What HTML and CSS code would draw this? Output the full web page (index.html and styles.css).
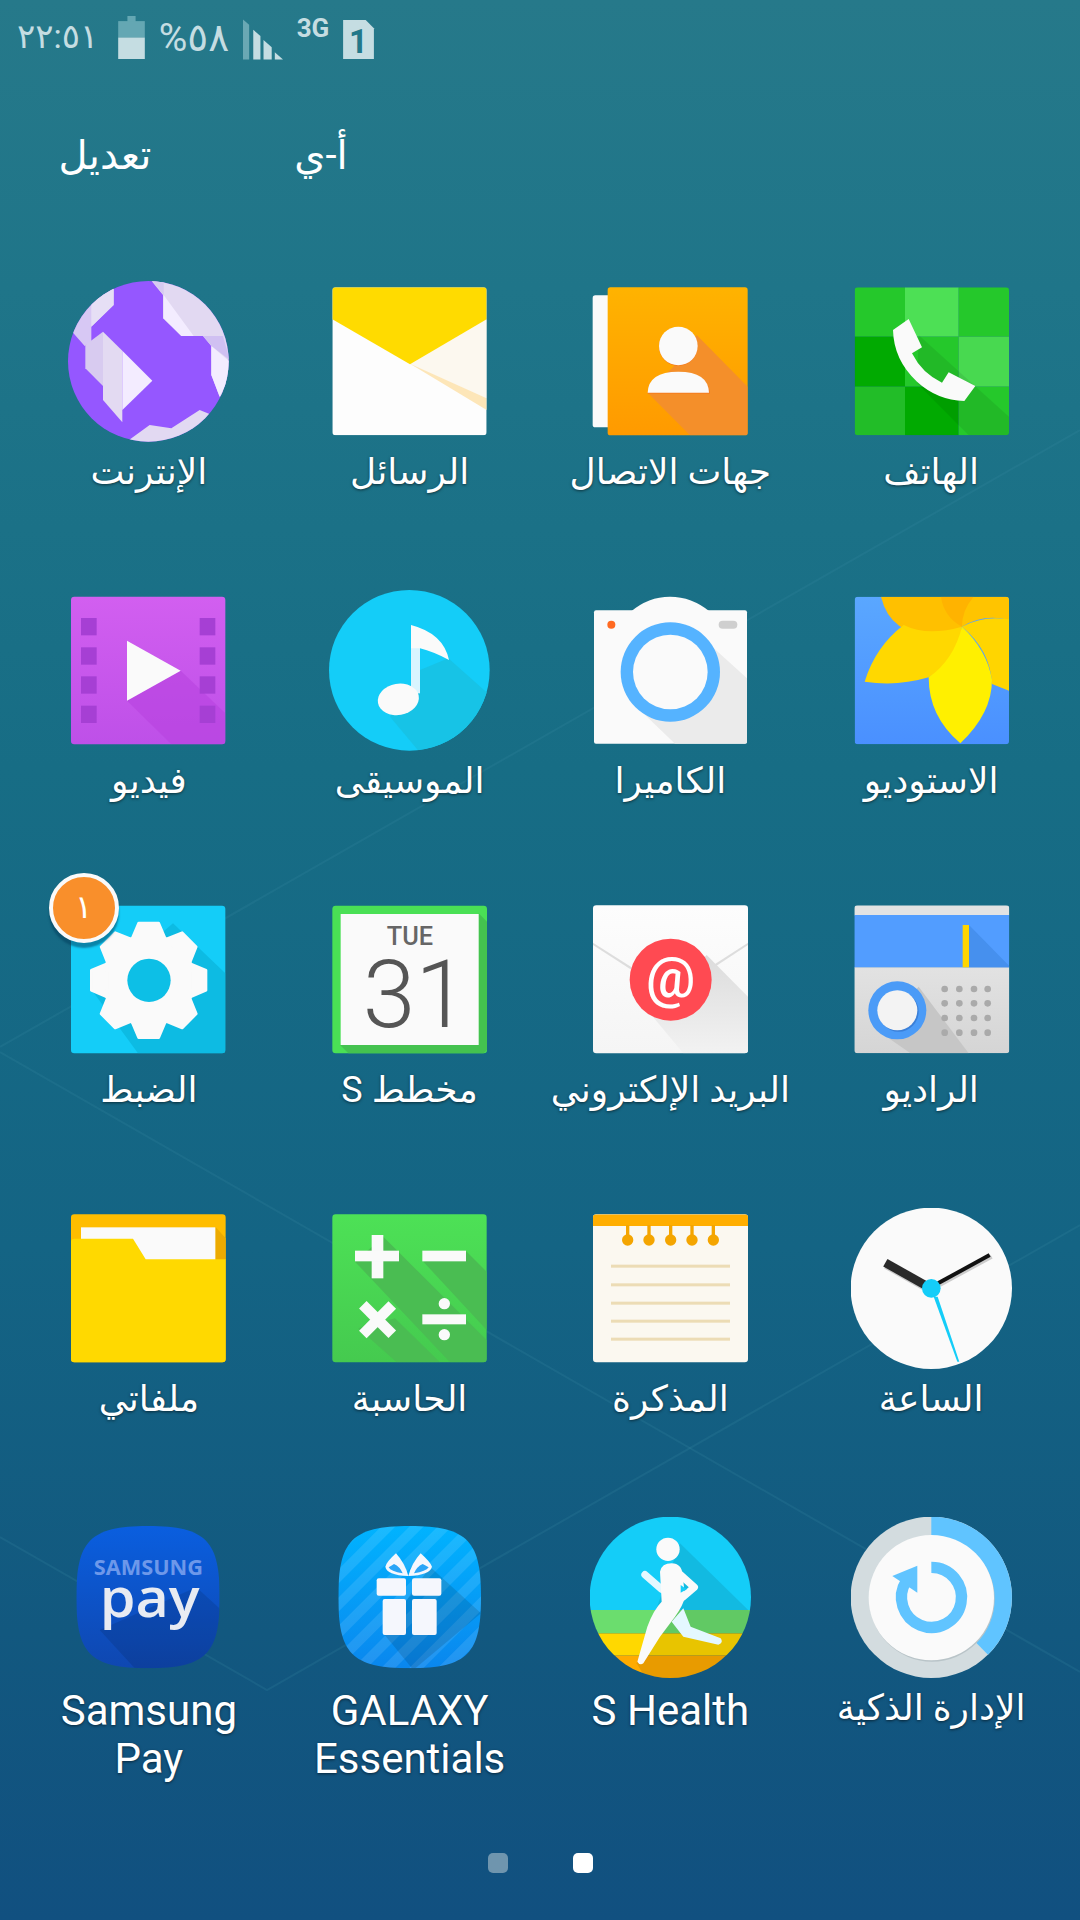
FILE: index.html
```html
<!DOCTYPE html>
<html lang="ar" dir="rtl">
<head>
    <meta charset="UTF-8">
    <title>التطبيقات</title>
    <link rel="stylesheet" href="styles.css">
</head>
<body>
<div class="screen">
    <svg class="wallpaper-lines" viewBox="0 0 1080 1920" aria-hidden="true">
        <polyline points="0,1047 1080,430"/>
        <polyline points="0,1052 1080,1672"/>
        <polyline points="0,1537 267,1690 1080,1225"/>
    </svg>

    <div class="status-bar" dir="ltr">
        <span class="status-time">٢٢:٥١</span>
        <svg class="st-battery" width="27" height="43" viewBox="0 0 26 42">
            <rect x="9" y="0" width="8" height="6" fill="#64a7b3"/>
            <rect x="0" y="5" width="26" height="16" fill="#64a7b3"/>
            <rect x="0" y="21" width="26" height="21" fill="#c5dde2"/>
        </svg>
        <span class="status-percent" dir="rtl">٥٨%</span>
        <svg class="st-signal" width="40" height="41" viewBox="0 0 39 39">
            <polygon points="0,0 6,5 6,39 0,39" fill="#6aa8b4"/>
            <polygon points="10,10 17,16 17,39 10,39" fill="#c5dde2"/>
            <polygon points="20,20 28,27 28,39 20,39" fill="#c5dde2"/>
            <polygon points="31,32 39,39 31,39" fill="#c5dde2"/>
        </svg>
        <span class="status-net">3G</span>
        <svg class="st-sim" width="31" height="39" viewBox="0 0 30 38">
            <polygon points="0,0 22,0 30,8 30,38 0,38" fill="#c5dde2"/>
            <text x="15" y="32" text-anchor="middle" class="sim-num">1</text>
        </svg>
    </div>

    <div class="top-nav" dir="ltr">
        <span class="top-link link-edit">تعديل</span>
        <span class="top-link link-az">أ-ي</span>
    </div>

    <div class="app-grid">

        <div class="app">
            <svg class="app-icon" viewBox="872 63 483 483">
                <defs><clipPath id="phoneClip"><rect x="883" y="82" width="463" height="444" rx="10"/></clipPath></defs>
                <g clip-path="url(#phoneClip)">
                    <rect x="883" y="82" width="151" height="148" fill="#25c82b"/>
                    <rect x="1034" y="82" width="161" height="148" fill="#4de055"/>
                    <rect x="1195" y="82" width="151" height="148" fill="#25c82b"/>
                    <rect x="883" y="230" width="151" height="150" fill="#01aa01"/>
                    <rect x="1034" y="230" width="161" height="150" fill="#25c82b"/>
                    <rect x="1195" y="230" width="151" height="150" fill="#48d950"/>
                    <rect x="883" y="380" width="151" height="146" fill="#22bd28"/>
                    <rect x="1034" y="380" width="161" height="146" fill="#01aa01"/>
                    <rect x="1195" y="380" width="151" height="146" fill="#25c82b"/>
                    <polygon points="1075,225 1346,470 1346,526 1225,526 1070,370" fill="#000" opacity=".07"/>
                </g>
                <path d="M998 210 L1045 177 L1085 262 L1055 280 Q1085 340 1145 368 L1165 337 L1245 378 L1212 423 Q1130 420 1070 365 Q1000 300 998 210 Z" fill="#fafafa"/>
            </svg>
            <div class="app-label">الهاتف</div>
        </div>

        <div class="app">
            <svg class="app-icon" viewBox="90 63 483 483">
                <defs>
                    <linearGradient id="contactFill" x1="0" y1="0" x2="0" y2="1"><stop offset="0" stop-color="#ffb300"/><stop offset="1" stop-color="#ff9a00"/></linearGradient>
                    <clipPath id="contactClip"><rect x="143" y="82" width="420" height="444" rx="8"/></clipPath>
                </defs>
                <rect x="98" y="106" width="60" height="396" rx="8" fill="#fafafa"/>
                <rect x="143" y="82" width="420" height="444" rx="8" fill="url(#contactFill)"/>
                <polygon clip-path="url(#contactClip)" points="410,225 563,380 563,526 390,526 263,398 340,320" fill="#f48f2a"/>
                <circle cx="355" cy="260" r="58" fill="#f47c20"/>
                <circle cx="355" cy="258" r="58" fill="#fafafa"/>
                <path d="M263 401 Q265 338 355 338 Q445 338 450 401 Z" fill="#f47c20"/>
                <path d="M263 398 Q265 335 355 335 Q445 335 447 398 Z" fill="#fafafa"/>
            </svg>
            <div class="app-label">جهات الاتصال</div>
        </div>

        <div class="app">
            <svg class="app-icon" viewBox="867 63 483 483">
                <defs><clipPath id="mailClip"><rect x="877" y="82" width="463" height="444" rx="10"/></clipPath></defs>
                <g clip-path="url(#mailClip)">
                    <rect x="877" y="82" width="463" height="444" fill="#fdfdfd"/>
                    <polygon points="1110,313 1340,178 1340,415" fill="#fcf8ef"/>
                    <polygon points="1110,311 1340,415 1340,450" fill="#fde6b8"/>
                    <polygon points="877,82 1340,82 1340,178 1110,313 877,178" fill="#ffdb00"/>
                </g>
            </svg>
            <div class="app-label">الرسائل</div>
        </div>

        <div class="app">
            <svg class="app-icon" viewBox="85 63 483 483">
                <defs><clipPath id="globeClip"><circle cx="326" cy="304" r="241"/></clipPath></defs>
                <circle cx="326" cy="304" r="241" fill="#9557ff"/>
                <g clip-path="url(#globeClip)">
                    <polygon points="335,62 370,105 370,175 425,228 490,228 515,258 515,345 540,410 570,400 570,62" fill="#e2d9f2"/>
                    <polygon points="335,60 372,60 372,105" fill="#d6caf0"/>
                    <polygon points="372,105 462,228 425,228 372,175" fill="#f3ecff"/>
                    <polygon points="490,228 550,228 570,300 515,258" fill="#d0c0f2"/>
                    <polygon points="515,258 570,305 570,350 540,410 515,345" fill="#f3ecff"/>
                    <polygon points="222,85 222,135 155,200 155,245 135,258 100,218 90,180 150,90" fill="#d7c8f4"/>
                    <polygon points="222,85 222,135 155,200 155,110" fill="#e6dff5"/>
                    <polygon points="137,255 190,215 190,378 137,325" fill="#d8cbf0"/>
                    <polygon points="190,215 248,272 248,487 190,420" fill="#e3daf2"/>
                    <polygon points="248,272 338,362 248,450" fill="#f3ecff"/>
                    <polygon points="268,540 330,495 395,505 480,450 530,470 400,560 280,560" fill="#e2d9f2"/>
                </g>
            </svg>
            <div class="app-label">الإنترنت</div>
        </div>

        <div class="app">
            <svg class="app-icon" viewBox="872 60 483 483">
                <defs>
                    <linearGradient id="studioFill" x1="0" y1="0" x2="0" y2="1"><stop offset="0" stop-color="#5aa7ff"/><stop offset="1" stop-color="#4a90ff"/></linearGradient>
                    <clipPath id="studioClip"><rect x="883" y="80" width="463" height="443" rx="10"/></clipPath>
                </defs>
                <g clip-path="url(#studioClip)">
                    <rect x="883" y="80" width="463" height="443" fill="url(#studioFill)"/>
                    <path d="M962 80 Q990 195 1120 195 Q1170 190 1205 170 L1240 80 Z" fill="#ffc000"/>
                    <path d="M1142 80 Q1150 140 1205 170 Q1225 110 1240 80 Z" fill="#ffb300"/>
                    <path d="M1240 80 Q1205 120 1205 170 Q1270 130 1346 150 L1346 80 Z" fill="#ffc400"/>
                    <path d="M1205 170 Q1270 135 1346 148 L1346 362 L1295 342 Q1290 240 1205 170 Z" fill="#ffd500"/>
                    <path d="M1205 170 Q1100 200 1030 165 Q945 230 913 335 Q1010 350 1105 322 Q1190 280 1205 170 Z" fill="#ffd800"/>
                    <path d="M1205 170 Q1180 270 1105 322 Q1105 440 1200 520 Q1295 430 1295 330 Q1280 240 1205 170 Z" fill="#fff000"/>
                </g>
            </svg>
            <div class="app-label">الاستوديو</div>
        </div>

        <div class="app">
            <svg class="app-icon" viewBox="90 60 483 483">
                <defs><clipPath id="camClip"><rect x="102" y="121" width="459" height="400" rx="6"/></clipPath></defs>
                <rect x="102" y="121" width="459" height="400" rx="6" fill="#fafafa"/>
                <path d="M212 125 Q265 80 330 80 Q395 80 450 125 Z" fill="#fafafa"/>
                <polygon clip-path="url(#camClip)" points="440,215 561,325 561,521 345,521 250,430" fill="#ebebeb"/>
                <circle cx="331" cy="306" r="149" fill="#55b3ff"/>
                <circle cx="331" cy="306" r="112" fill="#fafafa"/>
                <circle cx="154" cy="164" r="12" fill="#ff6a22"/>
                <rect x="476" y="152" width="56" height="24" rx="12" fill="#cfcfcf"/>
            </svg>
            <div class="app-label">الكاميرا</div>
        </div>

        <div class="app">
            <svg class="app-icon" viewBox="867 60 483 483">
                <defs><clipPath id="musicClip"><circle cx="1108" cy="301" r="241"/></clipPath></defs>
                <circle cx="1108" cy="301" r="241" fill="#14cdf8"/>
                <polygon clip-path="url(#musicClip)" points="1225,265 1360,385 1360,560 1150,560 1050,440 1140,300" fill="#17c3e6"/>
                <rect x="1113" y="200" width="27" height="170" fill="#d9f5ff"/>
                <path d="M1113 165 Q1210 190 1227 270 Q1180 245 1140 235 L1113 235 Z" fill="#fafafa"/>
                <ellipse cx="1075" cy="388" rx="62" ry="47" transform="rotate(-10 1075 388)" fill="#fafafa"/>
            </svg>
            <div class="app-label">الموسيقى</div>
        </div>

        <div class="app">
            <svg class="app-icon" viewBox="85 60 483 483">
                <defs>
                    <linearGradient id="videoFill" x1="0" y1="0" x2="0" y2="1"><stop offset="0" stop-color="#d25ff0"/><stop offset="1" stop-color="#be50e8"/></linearGradient>
                    <clipPath id="videoClip"><rect x="94" y="80" width="463" height="443" rx="10"/></clipPath>
                </defs>
                <rect x="94" y="80" width="463" height="443" rx="10" fill="url(#videoFill)"/>
                <polygon clip-path="url(#videoClip)" points="262,392 423,302 557,430 557,523 395,523" fill="#b843e0" opacity=".6"/>
                <g fill="#a63fd4">
                    <rect x="124" y="144" width="47" height="52"/><rect x="124" y="232" width="47" height="52"/>
                    <rect x="124" y="319" width="47" height="52"/><rect x="124" y="407" width="47" height="52"/>
                    <rect x="480" y="144" width="47" height="52"/><rect x="480" y="232" width="47" height="52"/>
                    <rect x="480" y="319" width="47" height="52"/><rect x="480" y="407" width="47" height="52"/>
                </g>
                <polygon points="262,212 423,302 262,392" fill="#fafafa"/>
            </svg>
            <div class="app-label">فيديو</div>
        </div>

        <div class="app">
            <svg class="app-icon" viewBox="872 57 483 483">
                <defs>
                    <linearGradient id="radioFill" x1="0" y1="0" x2="0" y2="1"><stop offset="0" stop-color="#e2e2e2"/><stop offset="1" stop-color="#d5d5d5"/></linearGradient>
                    <clipPath id="radioClip"><rect x="882" y="76" width="465" height="444" rx="10"/></clipPath>
                </defs>
                <g clip-path="url(#radioClip)">
                    <rect x="882" y="76" width="465" height="30" fill="#e3e3e3"/>
                    <rect x="882" y="105" width="465" height="158" fill="#529dff"/>
                    <rect x="882" y="262" width="465" height="258" fill="url(#radioFill)"/>
                    <polygon points="1226,135 1347,258 1347,262 1226,262" fill="#4690ee"/>
                    <rect x="1207" y="135" width="19" height="127" fill="#ffd500"/>
                    <polygon points="1075,320 1225,520 1050,520 950,450" fill="#c6c6c6"/>
                </g>
                <g fill="#aaa">
                    <circle cx="1153" cy="327" r="10"/><circle cx="1197" cy="327" r="10"/><circle cx="1241" cy="327" r="10"/><circle cx="1282" cy="327" r="10"/>
                    <circle cx="1153" cy="370" r="10"/><circle cx="1197" cy="370" r="10"/><circle cx="1241" cy="370" r="10"/><circle cx="1282" cy="370" r="10"/>
                    <circle cx="1153" cy="414" r="10"/><circle cx="1197" cy="414" r="10"/><circle cx="1241" cy="414" r="10"/><circle cx="1282" cy="414" r="10"/>
                    <circle cx="1153" cy="458" r="10"/><circle cx="1197" cy="458" r="10"/><circle cx="1241" cy="458" r="10"/><circle cx="1282" cy="458" r="10"/>
                </g>
                <circle cx="1011" cy="391" r="87" fill="#4b9bf7"/>
                <circle cx="1015" cy="395" r="60" fill="#3a7fd8"/>
                <circle cx="1011" cy="391" r="60" fill="#f3f3f3"/>
            </svg>
            <div class="app-label">الراديو</div>
        </div>

        <div class="app">
            <svg class="app-icon" viewBox="90 57 483 483">
                <defs>
                    <linearGradient id="emailFill" x1="0" y1="0" x2="0" y2="1"><stop offset="0" stop-color="#fdfdfd"/><stop offset="1" stop-color="#f5f5f5"/></linearGradient>
                    <linearGradient id="emailShade" x1="0" y1="0" x2="0" y2="1"><stop offset="0" stop-color="#dcdcdc"/><stop offset="1" stop-color="#f2f2f2"/></linearGradient>
                    <clipPath id="emailClip"><rect x="99" y="76" width="465" height="444" rx="10"/></clipPath>
                </defs>
                <rect x="99" y="76" width="465" height="444" rx="10" fill="url(#emailFill)"/>
                <g clip-path="url(#emailClip)">
                    <polygon points="99,188 215,262 215,270 99,195" fill="#ddd"/>
                    <polygon points="564,188 450,262 450,270 564,195" fill="#ddd"/>
                    <polygon points="440,225 564,350 564,520 370,520 270,400" fill="url(#emailShade)"/>
                </g>
                <circle cx="332" cy="299" r="123" fill="#ff4a52"/>
                <text x="332" y="350" text-anchor="middle" class="at-sign">@</text>
            </svg>
            <div class="app-label">البريد الإلكتروني</div>
        </div>

        <div class="app">
            <svg class="app-icon" viewBox="897 117 483 483">
                <rect x="907" y="137" width="464" height="443" rx="10" fill="#4ae055"/>
                <polygon points="1346,160 1371,185 1371,570 1361,580 955,580 930,555 1346,555" fill="#44c24f"/>
                <rect x="932" y="162" width="414" height="393" fill="#fafafa"/>
                <text x="1140" y="254" text-anchor="middle" class="cal-day">TUE</text>
                <text x="1156" y="500" text-anchor="middle" class="cal-num">31</text>
            </svg>
            <div class="app-label" dir="rtl">مخطط S</div>
        </div>

        <div class="app">
            <svg class="app-icon" viewBox="115 117 483 483">
                <defs>
                    <clipPath id="setClip"><rect x="124" y="137" width="463" height="443" rx="10"/></clipPath>
                    <polygon id="gearTooth" points="-30,-172 30,-172 50,-125 -50,-125"/>
                </defs>
                <rect x="124" y="137" width="463" height="443" rx="10" fill="#14cdf8"/>
                <polygon clip-path="url(#setClip)" points="430,190 587,340 587,580 325,580 190,395" fill="#0dbbe3"/>
                <g transform="translate(357 361)" fill="#fafafa" stroke="#fafafa" stroke-width="8" stroke-linejoin="round">
                    <circle r="135"/>
                    <use href="#gearTooth"/>
                    <use href="#gearTooth" transform="rotate(45)"/>
                    <use href="#gearTooth" transform="rotate(90)"/>
                    <use href="#gearTooth" transform="rotate(135)"/>
                    <use href="#gearTooth" transform="rotate(180)"/>
                    <use href="#gearTooth" transform="rotate(225)"/>
                    <use href="#gearTooth" transform="rotate(270)"/>
                    <use href="#gearTooth" transform="rotate(315)"/>
                </g>
                <circle cx="358" cy="361" r="65" fill="#0dbfe6"/>
            </svg>
            <span class="app-badge">١</span>
            <div class="app-label">الضبط</div>
        </div>

        <div class="app">
            <svg class="app-icon" viewBox="874 54 483 483">
                <circle cx="1115" cy="295" r="242" fill="#fafafa"/>
                <line x1="980" y1="224" x2="1100" y2="292" stroke="#ccc" stroke-width="26"/>
                <line x1="1140" y1="285" x2="1296" y2="200" stroke="#ccc" stroke-width="12"/>
                <line x1="977" y1="218" x2="1097" y2="286" stroke="#2a2a2a" stroke-width="26"/>
                <line x1="1135" y1="280" x2="1290" y2="195" stroke="#111" stroke-width="12"/>
                <polygon points="1122,320 1134,320 1199,515 1193,515" fill="#14cdf8"/>
                <circle cx="1115" cy="295" r="28" fill="#14cdf8"/>
            </svg>
            <div class="app-label">الساعة</div>
        </div>

        <div class="app">
            <svg class="app-icon" viewBox="90 54 483 483">
                <defs><clipPath id="memoClip"><rect x="99" y="73" width="465" height="444" rx="10"/></clipPath></defs>
                <rect x="99" y="73" width="465" height="444" rx="10" fill="#fbf8f0"/>
                <rect x="99" y="73" width="465" height="35" fill="#ffae00" clip-path="url(#memoClip)"/>
                <g fill="#f4a500">
                    <rect x="198" y="105" width="10" height="35"/><circle cx="203" cy="150" r="17"/>
                    <rect x="262" y="105" width="10" height="35"/><circle cx="267" cy="150" r="17"/>
                    <rect x="327" y="105" width="10" height="35"/><circle cx="332" cy="150" r="17"/>
                    <rect x="391" y="105" width="10" height="35"/><circle cx="396" cy="150" r="17"/>
                    <rect x="455" y="105" width="10" height="35"/><circle cx="460" cy="150" r="17"/>
                </g>
                <g fill="#ecdcb5">
                    <rect x="153" y="224" width="357" height="9"/>
                    <rect x="153" y="280" width="357" height="9"/>
                    <rect x="153" y="335" width="357" height="9"/>
                    <rect x="153" y="389" width="357" height="9"/>
                    <rect x="153" y="443" width="357" height="9"/>
                </g>
            </svg>
            <div class="app-label">المذكرة</div>
        </div>

        <div class="app">
            <svg class="app-icon" viewBox="867 54 483 483">
                <defs>
                    <linearGradient id="calcFill" x1="0" y1="0" x2="0" y2="1"><stop offset="0" stop-color="#4de156"/><stop offset="1" stop-color="#45ca4f"/></linearGradient>
                    <clipPath id="calcClip"><rect x="877" y="73" width="463" height="444" rx="10"/></clipPath>
                </defs>
                <rect x="877" y="73" width="463" height="444" rx="10" fill="url(#calcFill)"/>
                <g clip-path="url(#calcClip)" fill="#4abd52">
                    <polygon points="1150,215 1280,185 1340,245 1340,420"/>
                    <polygon points="945,215 1030,140 1340,450 1340,517 1230,517"/>
                    <polygon points="955,415 1065,385 1200,517 1070,517"/>
                </g>
                <g fill="#fafafa">
                    <rect x="995" y="135" width="35" height="130"/>
                    <rect x="945" y="182" width="132" height="32"/>
                    <rect x="1147" y="182" width="131" height="32"/>
                    <rect x="997" y="327" width="32" height="125" transform="rotate(45 1013 389)"/>
                    <rect x="950" y="373" width="125" height="32" transform="rotate(45 1013 389)"/>
                    <rect x="1147" y="373" width="131" height="30"/>
                    <circle cx="1213" cy="341" r="17"/>
                    <circle cx="1213" cy="434" r="17"/>
                </g>
            </svg>
            <div class="app-label">الحاسبة</div>
        </div>

        <div class="app">
            <svg class="app-icon" viewBox="85 54 483 483">
                <rect x="94" y="73" width="464" height="444" rx="10" fill="#ffbd00"/>
                <polygon points="527,110 558,145 558,210 527,210" fill="#ecaa00"/>
                <rect x="124" y="112" width="403" height="98" fill="#fafafa"/>
                <path d="M94 155 Q94 146 105 146 L280 146 L318 208 L558 208 L558 507 Q558 517 548 517 L104 517 Q94 517 94 507 Z" fill="#ffd900"/>
            </svg>
            <div class="app-label">ملفاتي</div>
        </div>

        <div class="app">
            <svg class="app-icon" viewBox="874 51 483 483">
                <circle cx="1115" cy="292" r="242" fill="#d3dcdf"/>
                <path d="M1115 292 L1115 50 A242 242 0 0 1 1285 464 Z" fill="#60c4ff"/>
                <circle cx="1117" cy="297" r="188" fill="#b9c4c8"/>
                <circle cx="1115" cy="293" r="188" fill="#fafafa"/>
                <path d="M1115 202 A90 90 0 1 1 1040 243" fill="none" stroke="#60c4ff" stroke-width="34"/>
                <polygon points="1073,197 998,228 1073,278" fill="#60c4ff"/>
            </svg>
            <div class="app-label">الإدارة الذكية</div>
        </div>

        <div class="app">
            <svg class="app-icon" viewBox="90 51 483 483">
                <defs><clipPath id="healthClip"><circle cx="331" cy="292" r="242"/></clipPath></defs>
                <g clip-path="url(#healthClip)">
                    <rect x="85" y="40" width="490" height="290" fill="#14cdf8"/>
                    <rect x="85" y="330" width="490" height="70" fill="#6bdd6e"/>
                    <rect x="85" y="400" width="490" height="67" fill="#ffd800"/>
                    <rect x="85" y="467" width="490" height="70" fill="#ffab00"/>
                    <polygon points="360,130 575,340 575,540 260,540 230,490" fill="#000" opacity=".09"/>
                </g>
                <polyline points="255,224 305,268" fill="none" stroke="#e4f8ff" stroke-width="22" stroke-linecap="round"/>
                <path d="M335 365 L370 325 L392 380 L482 415 Q492 428 475 434 L370 410 Z" fill="#e4f8ff"/>
                <circle cx="324" cy="148" r="35" fill="#fafafa"/>
                <path d="M300 215 Q305 190 335 190 Q365 190 368 225 L375 290 Q370 315 345 350 L300 410 L250 490 Q240 498 232 485 L262 380 Q280 330 305 305 Z" fill="#fafafa"/>
                <polyline points="362,225 403,262 368,292" fill="none" stroke="#fafafa" stroke-width="22" stroke-linecap="round" stroke-linejoin="round"/>
                <polygon points="362,255 380,268 362,278" fill="#14cdf8"/>
            </svg>
            <div class="app-label latin">S Health</div>
        </div>

        <div class="app">
            <svg class="app-icon" viewBox="867 51 483 483">
                <defs>
                    <linearGradient id="giftFill" x1="0" y1="0" x2="0" y2="1"><stop offset="0" stop-color="#00b4ff"/><stop offset="1" stop-color="#0a86ee"/></linearGradient>
                    <pattern id="giftStripes" width="60" height="60" patternUnits="userSpaceOnUse" patternTransform="rotate(-45)"><rect width="60" height="30" fill="#fff" opacity=".1"/></pattern>
                    <clipPath id="giftClip"><path d="M1109 78 C1285 78 1323 125 1323 292 C1323 458 1285 505 1109 505 C933 505 895 458 895 292 C895 125 933 78 1109 78 Z"/></clipPath>
                </defs>
                <g clip-path="url(#giftClip)">
                    <rect x="890" y="70" width="440" height="440" fill="url(#giftFill)"/>
                    <rect x="890" y="70" width="440" height="440" fill="url(#giftStripes)"/>
                    <polygon points="1170,200 1323,340 1120,510 1030,400" fill="#000" opacity=".12"/>
                </g>
                <g fill="#f5f7fd">
                    <path d="M1105 228 Q1040 225 1036 200 Q1040 185 1068 160 Q1095 190 1105 228 Z"/>
                    <path d="M1105 228 Q1170 225 1176 200 Q1170 185 1142 160 Q1115 190 1105 228 Z"/>
                    <rect x="1010" y="235" width="88" height="52" rx="6"/>
                    <rect x="1116" y="235" width="88" height="52" rx="6"/>
                    <rect x="1028" y="297" width="70" height="108" rx="6"/>
                    <rect x="1116" y="297" width="74" height="108" rx="6"/>
                </g>
                <path d="M1088 220 Q1052 214 1046 202 Q1056 196 1062 192 Q1080 200 1088 220 Z" fill="#2ba5f7"/>
                <path d="M1122 220 Q1158 214 1166 202 Q1156 196 1148 192 Q1130 200 1122 220 Z" fill="#2ba5f7"/>
            </svg>
            <div class="app-label latin">GALAXY Essentials</div>
        </div>

        <div class="app">
            <svg class="app-icon" viewBox="85 51 483 483">
                <defs>
                    <linearGradient id="payFill" x1="0" y1="0" x2="0" y2="1"><stop offset="0" stop-color="#0a5fe0"/><stop offset="1" stop-color="#0f47b0"/></linearGradient>
                    <clipPath id="payClip"><path d="M325 78 C502 78 540 125 540 292 C540 458 502 505 325 505 C148 505 110 458 110 292 C110 125 148 78 325 78 Z"/></clipPath>
                </defs>
                <g clip-path="url(#payClip)">
                    <rect x="105" y="70" width="440" height="440" fill="url(#payFill)"/>
                    <polygon points="470,262 545,330 545,510 290,510 180,390" fill="#000" opacity=".1"/>
                </g>
                <text x="326" y="225" text-anchor="middle" textLength="328" lengthAdjust="spacingAndGlyphs" class="pay-brand">SAMSUNG</text>
                <text x="330" y="352" text-anchor="middle" textLength="300" lengthAdjust="spacingAndGlyphs" class="pay-word">pay</text>
            </svg>
            <div class="app-label latin">Samsung Pay</div>
        </div>

    </div>

    <div class="page-dots" dir="ltr">
        <span class="dot"></span>
        <span class="dot dot-active"></span>
    </div>
</div>
</body>
</html>
```

FILE: styles.css
```css
:root {
    --status: #c5dde2;
    --label-font: Roboto, "Noto Sans", "DejaVu Sans", sans-serif;
}

html, body {
    margin: 0;
    padding: 0;
}

.screen {
    position: relative;
    width: 1080px;
    height: 1920px;
    overflow: hidden;
    background: linear-gradient(to bottom, #26798a 0%, #1f7589 15%, #176d85 40%, #146484 65%, #12587f 85%, #115080 100%);
    font-family: var(--label-font);
    color: #fff;
}

.wallpaper-lines {
    position: absolute;
    top: 0;
    left: 0;
    width: 1080px;
    height: 1920px;
}

.wallpaper-lines polyline {
    fill: none;
    stroke: #3a8aa5;
    stroke-opacity: .2;
    stroke-width: 2;
}

/* status bar */
.status-bar {
    position: relative;
    display: flex;
    align-items: flex-start;
    height: 76px;
    padding: 16px 0 0 17px;
    box-sizing: border-box;
    color: var(--status);
}

.status-time {
    width: 101px;
    font-size: 34px;
    line-height: 40px;
}

.st-battery {
    flex: none;
}

.status-percent {
    width: 98px;
    text-align: center;
    font-size: 39px;
    line-height: 44px;
}

.st-signal {
    flex: none;
    margin-top: 3px;
}

.status-net {
    width: 60px;
    text-align: center;
    font-size: 26px;
    font-weight: 700;
    line-height: 24px;
}

.st-sim {
    flex: none;
    margin-top: 4px;
    overflow: visible;
}

.sim-num {
    font-size: 32px;
    font-weight: 700;
    fill: #227889;
}

/* top links */
.top-nav {
    position: relative;
    display: flex;
    height: 205px;
    padding-top: 55px;
    box-sizing: border-box;
}

.top-link {
    text-align: center;
    font-size: 40px;
    line-height: 50px;
}

.link-edit {
    width: 210px;
}

.link-az {
    width: 222px;
}

/* icons */
.app-grid {
    position: relative;
    display: grid;
    grid-template-columns: repeat(4, 1fr);
    grid-auto-rows: 309px;
    padding: 0 18.5px;
}

.app {
    position: relative;
    display: flex;
    flex-direction: column;
    align-items: center;
}

.app-icon {
    flex: none;
    width: 161px;
    height: 161px;
}

.app-label {
    width: 250px;
    margin-top: 6px;
    text-align: center;
    font-size: 36px;
    line-height: 48px;
    text-shadow: 0 1px 3px rgba(0, 0, 0, .55);
}

.latin {
    margin-top: 9px;
    font-size: 42px;
}

.app-badge {
    position: absolute;
    top: -26px;
    left: 30px;
    width: 62px;
    height: 62px;
    border: 4px solid #fafafa;
    border-radius: 50%;
    background: #f98f2b;
    box-shadow: 0 5px 2px rgba(0, 60, 90, .5);
    text-align: center;
    font-size: 32px;
    line-height: 60px;
}

.at-sign {
    font-size: 165px;
    font-family: Roboto, sans-serif;
    font-weight: 500;
    fill: #fff;
}

.cal-day {
    font-size: 76px;
    font-family: Roboto, sans-serif;
    font-weight: 500;
    fill: #666;
}

.cal-num {
    font-size: 285px;
    font-family: Roboto, sans-serif;
    font-weight: 300;
    fill: #555;
}

.pay-brand {
    font-size: 62px;
    font-family: "Open Sans", sans-serif;
    font-weight: 700;
    fill: #6d98ea;
}

.pay-word {
    font-size: 165px;
    font-family: "Open Sans", sans-serif;
    font-weight: 600;
    fill: #e8ebf2;
}

/* pages */
.page-dots {
    position: relative;
    display: flex;
    justify-content: center;
    gap: 65px;
    margin-top: 27px;
}

.dot {
    width: 20px;
    height: 20px;
    border-radius: 5px;
    background: #6f95ae;
}

.dot-active {
    background: #fff;
}
```
